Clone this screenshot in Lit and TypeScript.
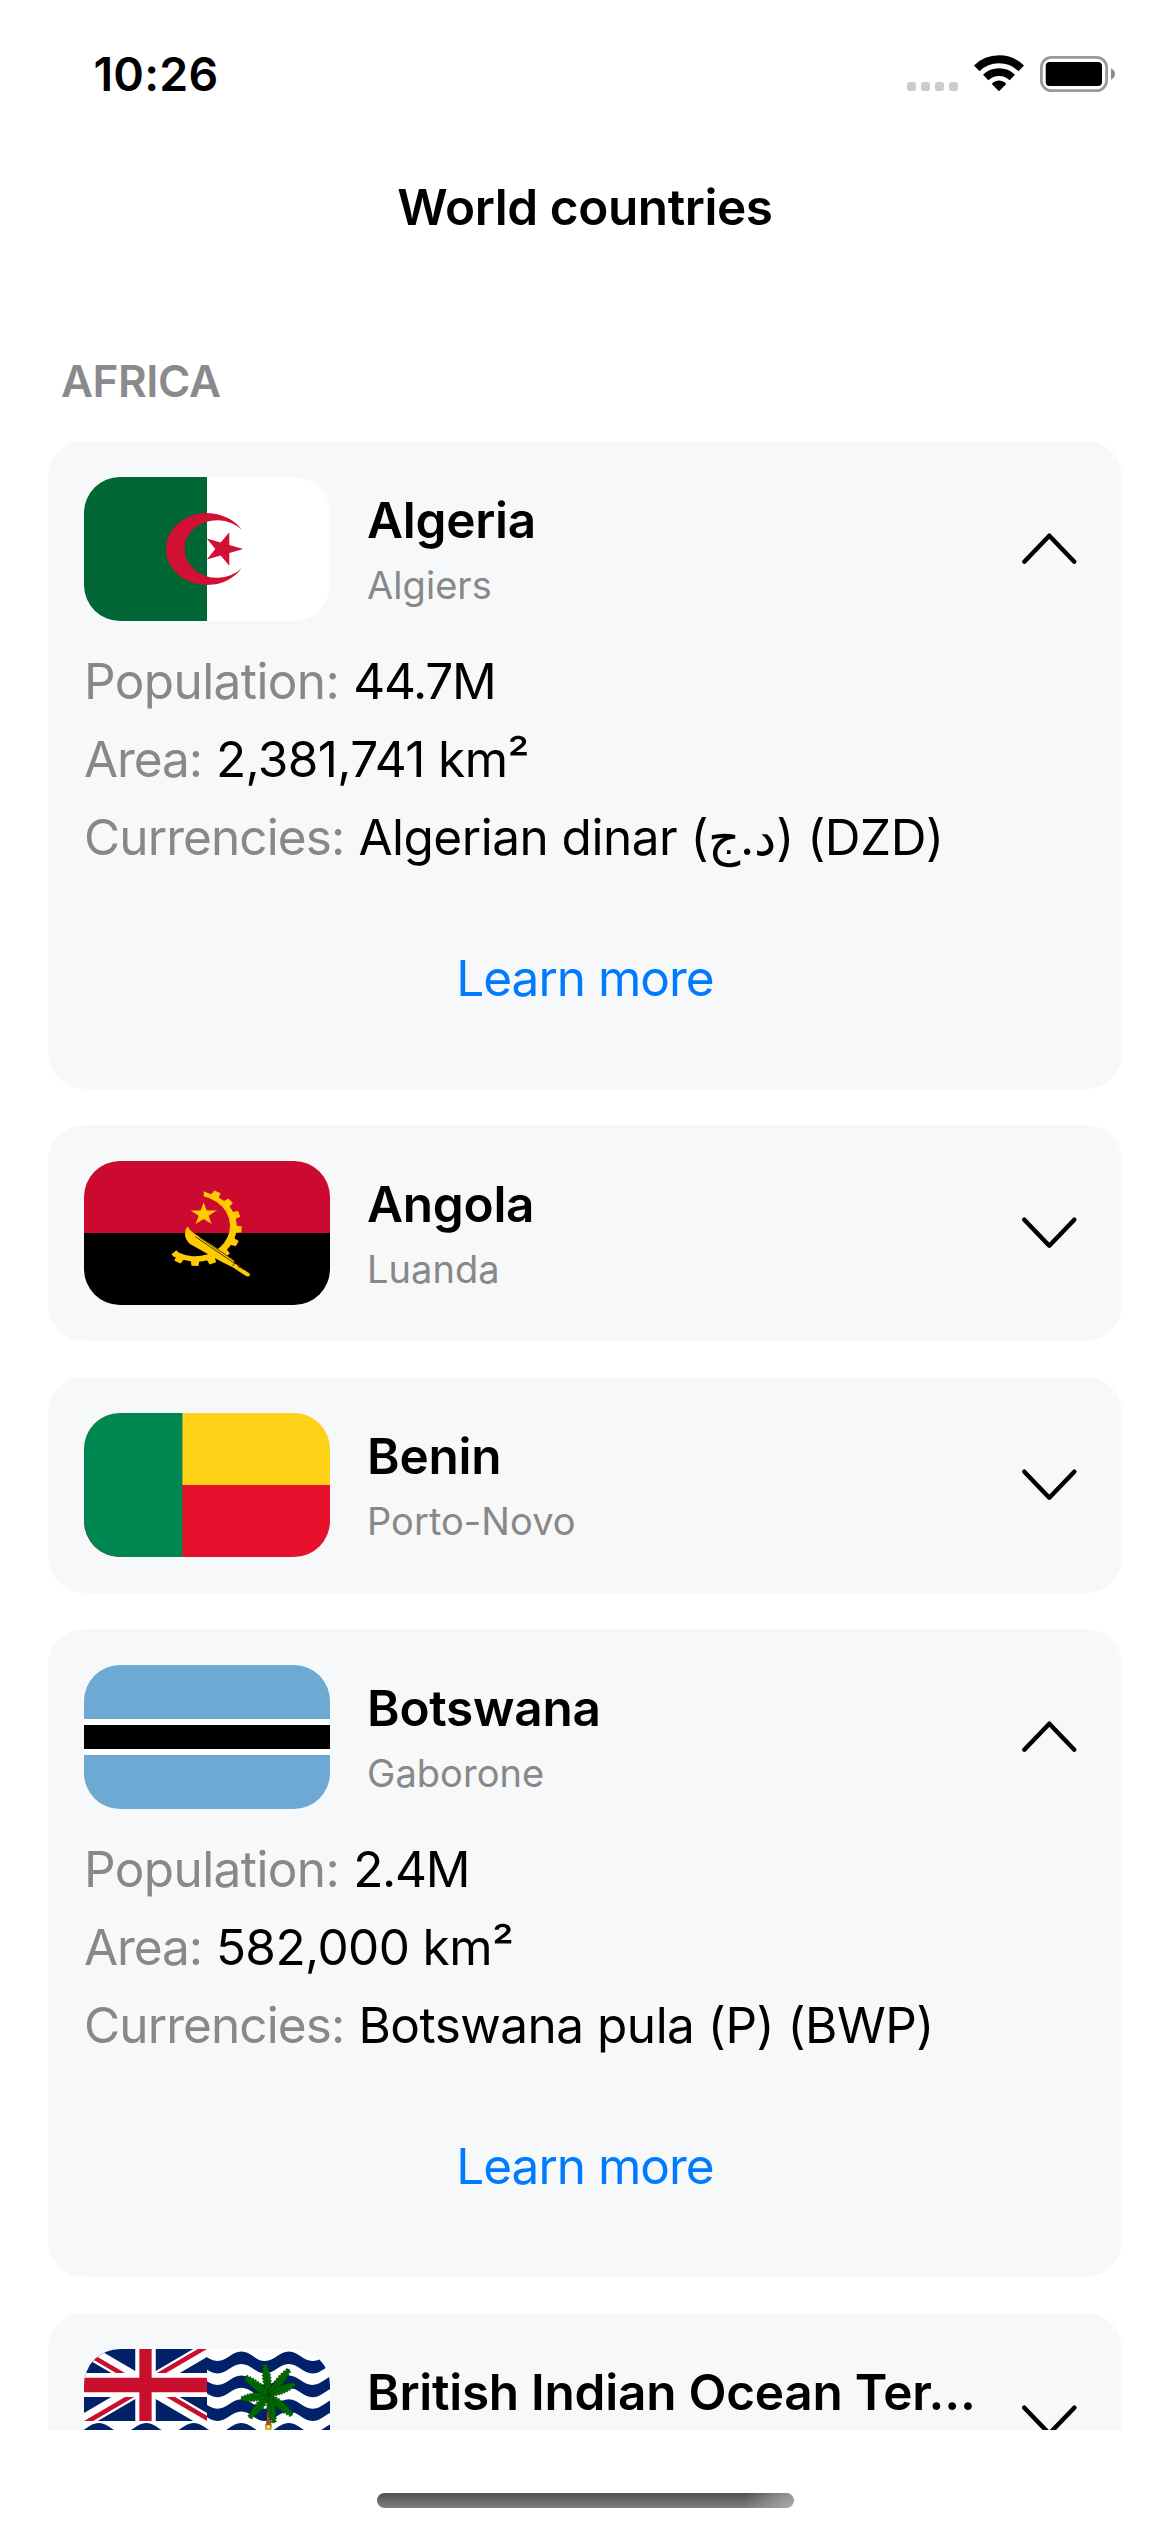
import { LitElement, html, css, svg, nothing, type TemplateResult } from "lit";
import { customElement, property, state } from "lit/decorators.js";

interface Country {
  name: string;
  capital?: string;
  flag: TemplateResult;
  population?: string;
  area?: string;
  currencies?: string;
}

// Flags are drawn on a 246 x 144 canvas.

const star = (cx: number, cy: number, r: number, rotation: number) =>
  Array.from({ length: 10 }, (_, i) => {
    const radius = i % 2 ? r * 0.382 : r;
    const angle = ((rotation + i * 36) * Math.PI) / 180;
    return `${(cx + radius * Math.cos(angle)).toFixed(2)},${(cy + radius * Math.sin(angle)).toFixed(2)}`;
  }).join(" ");

const algeria = svg`
  <rect width="123" height="144" fill="#006633"></rect>
  <rect x="123" width="123" height="144" fill="#fff"></rect>
  <g fill="#d21034" transform="scale(1.1389 1)">
    <path d="M138.4 52.7A36 36 0 1 0 138.4 91.3A28.8 28.8 0 1 1 138.4 52.7Z"></path>
    <polygon points=${star(122.1, 72, 17.7, 0)}></polygon>
  </g>`;

// Point on the cogwheel, by angle in degrees.
const cog = (r: number, deg: number) => {
  const a = (deg * Math.PI) / 180;
  return `${(97 + r * Math.cos(a)).toFixed(1)} ${(140 + r * Math.sin(a)).toFixed(1)}`;
};

// The machete is drawn without the horizontal stretch that the cogwheel has.
const angola = svg`
  <rect width="246" height="72" fill="#cc092f"></rect>
  <rect y="72" width="246" height="72"></rect>
  <g transform="translate(76 19) scale(0.3797 0.3333)" fill="#ffcb00">
    <path d=${`M${cog(108, -80)}L${cog(105, -73)}A105 105 0 1 1 ${cog(105, 121)}L${cog(109, 123)}L${cog(106, 129)}L${cog(89, 127)}L${cog(91.5, 122)}A91.5 91.5 0 1 0 ${cog(93, -79)}Z`}></path>
    ${[-62.5, -41, -19, 4, 25.5, 47, 69, 92.5, 115.5].map(
      (a) => svg`<path d="M98 -12L118 -9V9L98 12Z" transform=${`translate(97 140) rotate(${a})`}></path>`
    )}
    <polygon points=${star(115, 103, 36, -90)}></polygon>
  </g>
  <g transform="translate(76 19) scale(0.3333)" fill="#ffcb00">
    <path d="M83 139Q88 152 106 163L160 197L221 240L224 250L262 276Q272 281 269 287Q264 292 257 287L218 262L186 246L90 192Q75 178 75 163Q75 148 83 139Z"></path>
    <path d="M106 170L222 249M118 171L224 243M218 258L226 247M233 259L242 264M242 260L250 270" fill="none" stroke="#000" stroke-width="2.2"></path>
  </g>`;

const benin = svg`
  <rect width="246" height="72" fill="#fcd116"></rect>
  <rect y="72" width="246" height="72" fill="#e8112d"></rect>
  <rect width="98.4" height="144" fill="#008751"></rect>`;

const botswana = svg`
  <rect width="246" height="144" fill="#6da9d2"></rect>
  <rect y="54" width="246" height="36" fill="#fff"></rect>
  <rect y="60" width="246" height="24"></rect>`;

// Half a wave period, in flag units.
const half = 23.75;

const waveEdge = (start: number, dir: 1 | -1, top: number) => {
  let d = "";
  for (let i = 0; i < 12; i++) {
    const x = start + dir * half * i;
    const from = i % 2 ? top + 9.5 : top;
    const to = i % 2 ? top : top + 9.5;
    d += `C${x + dir * 9.5} ${from} ${x + dir * (half - 9.5)} ${to} ${x + dir * half} ${to}`;
  }
  return d;
};

// One blue band whose crests reach up to y.
const band = (y: number) => {
  const left = 14.8 - 2 * half;
  const right = left + 12 * half;
  return `M${left} ${y}${waveEdge(left, 1, y)}V${y + 12.4}${waveEdge(right, -1, y + 12.4)}Z`;
};

// Serrated palm leaf from the crown to a tip.
const frond = (tx: number, ty: number) => {
  const cx = 184.7;
  const cy = 46;
  const len = Math.hypot(tx - cx, ty - cy);
  const ux = (tx - cx) / len;
  const uy = (ty - cy) / len;
  const at = (d: number, w: number) => `${(cx + ux * d - uy * w).toFixed(1)},${(cy + uy * d + ux * w).toFixed(1)}`;
  const left: string[] = [];
  const right: string[] = [];
  for (let i = 1; i <= 9; i++) {
    const d = (len * i) / 9.8;
    const w = 2 + 2.7 * Math.sin((Math.PI * (i + 0.6)) / 11);
    left.push(at(d - 0.8, w - 1.5), at(d + 1.2, w));
    right.unshift(at(d + 1.2, -w), at(d - 0.8, 1.5 - w));
  }
  return [at(0, 0), ...left, at(len, 0), ...right].join(" ");
};

const fronds = [
  [181, 15], [205.3, 20.3], [211, 35], [208.3, 66.3], [190, 74], [165.3, 69], [157, 50], [161, 27.7],
];

const indianOcean = svg`
  <rect width="246" height="144" fill="#fff"></rect>
  ${[2.6, 26.4, 50.2, 74, 97.8, 121.6].map((y) => svg`<path d=${band(y)} fill="#012169"></path>`)}
  <svg width="123" height="72" viewBox="0 0 60 30" preserveAspectRatio="none">
    <clipPath id="quarters"><path d="M30 15H60V30ZV30H0ZH0V0ZV0H60Z"></path></clipPath>
    <rect width="60" height="30" fill="#012169"></rect>
    <path d="M0 0L60 30M60 0L0 30" stroke="#fff" stroke-width="6"></path>
    <path d="M0 0L60 30M60 0L0 30" stroke="#c8102e" stroke-width="4" clip-path="url(#quarters)"></path>
    <path d="M30 0V30M0 15H60" stroke="#fff" stroke-width="10"></path>
    <path d="M30 0V30M0 15H60" stroke="#c8102e" stroke-width="6"></path>
  </svg>
  <path d="M183.3 50H186L186.8 78H182.4Z" fill="#a5501c" stroke="#2b1606" stroke-width="0.4"></path>
  <g fill="#006c00" stroke="#06250a" stroke-width="0.4">
    ${fronds.map(([x, y]) => svg`<polygon points=${frond(x, y)}></polygon>`)}
  </g>
  <path d="M184.7 46L182 24M184.7 46L198 29M184.7 46L202 39M184.7 46L200 60M184.7 46L188 66M184.7 46L171 62M184.7 46L167 49M184.7 46L168 34" fill="none" stroke="#06350a" stroke-width="0.5"></path>
  <path d="M181.4 75.5H187.4L186.6 84H182.2Z" fill="#e8b21c" stroke="#6b4708" stroke-width="0.5"></path>
  <circle cx="184.4" cy="78" r="1.2" fill="#fff3b0"></circle>`;

const countries: Country[] = [
  { name: "Algeria", capital: "Algiers", flag: algeria, population: "44.7M", area: "2,381,741 km²", currencies: "Algerian dinar (د.ج) (DZD)" },
  { name: "Angola", capital: "Luanda", flag: angola },
  { name: "Benin", capital: "Porto-Novo", flag: benin },
  { name: "Botswana", capital: "Gaborone", flag: botswana, population: "2.4M", area: "582,000 km²", currencies: "Botswana pula (P) (BWP)" },
  { name: "British Indian Ocean Ter…", flag: indianOcean },
];

@customElement("status-bar")
export class StatusBar extends LitElement {
  static styles = css`
    :host {
      display: flex;
      box-sizing: border-box;
      height: 141px;
      padding: 7px 54px 0 93.5px;
      align-items: center;
      justify-content: space-between;
    }
    .time { font-size: 46.5px; font-weight: 600; letter-spacing: 0.19px; line-height: 60px; }
    .icons { display: block; }
  `;

  render() {
    return html`
      <span class="time">10:26</span>
      <svg class="icons" width="209" height="40" viewBox="0 0 209 40">
        <g fill="#cccccc">
          ${[0, 14, 28, 42].map((x) => svg`<rect x=${x} y="28" width="9" height="9" rx="2.8"></rect>`)}
        </g>
        <g transform="translate(92 37.3) scale(0.3333)">
          <path d="M-66.7 -69.1A96 96 0 0 1 66.7 -69.1" fill="none" stroke="#000" stroke-width="24"></path>
          <path d="M-39.9 -41.4A57.5 57.5 0 0 1 39.9 -41.4" fill="none" stroke="#000" stroke-width="23"></path>
          <path d="M0 0L-21 -21Q-21 -24 -17 -27Q0 -38 17 -27Q21 -24 21 -21Z"></path>
        </g>
        <rect x="134.4" y="3.4" width="65.2" height="33.2" rx="10" fill="none" stroke="#999999" stroke-width="2.8"></rect>
        <rect x="138.7" y="8" width="56.3" height="24" rx="4"></rect>
        <path d="M204 14.2Q208 16.5 208 20T204 25.8Z" fill="#8c8c8c"></path>
      </svg>
    `;
  }
}

@customElement("country-card")
export class CountryCard extends LitElement {
  static styles = css`
    :host { display: block; flex: none; padding: 36px; border-radius: 36px; background: #f7f8fa; }
    .head { display: flex; height: 144px; align-items: center; }
    .flag { display: block; flex: none; border-radius: 36px; overflow: hidden; }
    .titles { display: flex; flex: 1; min-width: 0; flex-direction: column; gap: 12px; margin-left: 37px; white-space: nowrap; }
    .name { font-size: 49.5px; font-weight: 600; line-height: 60px; letter-spacing: -0.25px; }
    .capital { min-height: 46px; font-size: 38px; line-height: 46px; letter-spacing: 0.05px; color: #888888; }
    .chevron { display: block; flex: none; }
    .details { margin: 21px 0 0; font-size: 49.5px; }
    .row { display: flex; gap: 14px; line-height: 78px; white-space: nowrap; }
    .label { color: #888888; }
    .value { margin: 0; }
    .population .label { letter-spacing: -0.6px; }
    .population .value { letter-spacing: -1.25px; }
    .area .label { letter-spacing: -1.1px; }
    .area .value { letter-spacing: -0.6px; }
    .currencies .label { letter-spacing: -0.9px; }
    .currencies .value { letter-spacing: -0.5px; }
    .more {
      display: block; width: 100%; height: 150px; margin-top: 27px; padding: 0; border: 0; background: none;
      font: inherit; font-size: 49.5px; letter-spacing: -1px; color: #007aff;
    }
  `;

  @property({ attribute: false }) country!: Country;

  render() {
    const { name, capital, flag, population, area, currencies } = this.country;
    const open = population !== undefined;
    return html`
      <div class="head">
        <svg class="flag" width="246" height="144" viewBox="0 0 246 144">${flag}</svg>
        <div class="titles">
          <span class="name">${name}</span>
          <span class="capital">${capital ?? nothing}</span>
        </div>
        <svg class="chevron" width="72" height="72" viewBox="0 0 72 72">
          <path d=${open ? "M10.3 48.7L35.3 22.7L60.3 48.7" : "M10.3 22.7L35.3 48.7L60.3 22.7"}
            fill="none" stroke="#000" stroke-width="4.5" stroke-linecap="round" stroke-linejoin="round"></path>
        </svg>
      </div>
      ${open
        ? html`
            <dl class="details">
              <div class="row population"><dt class="label">Population:</dt><dd class="value">${population}</dd></div>
              <div class="row area"><dt class="label">Area:</dt><dd class="value">${area}</dd></div>
              <div class="row currencies"><dt class="label">Currencies:</dt><dd class="value">${currencies}</dd></div>
            </dl>
            <button class="more">Learn more</button>
          `
        : nothing}
    `;
  }
}

@customElement("app-root")
export class AppRoot extends LitElement {
  static styles = css`
    :host {
      display: flex; flex-direction: column; width: 1170px; height: 2532px; overflow: hidden;
      background: #fff; color: #000; font-family: Inter, "Noto Sans", sans-serif;
    }
    .title { margin: 0; text-align: center; font-size: 49.5px; font-weight: 600; line-height: 132px; letter-spacing: -0.41px; }
    .list { display: flex; flex: 1; min-height: 0; flex-direction: column; gap: 36px; padding: 48px 48px 0; overflow: hidden; }
    .region { flex: none; margin: 0 0 -36px 13px; font-size: 44px; font-weight: 600; line-height: 120px; letter-spacing: -0.42px; color: #8a8a8e; }
    .home { display: flex; flex: none; justify-content: center; height: 39px; padding-top: 63px; }
    .indicator {
      width: 417px; height: 15px; border-radius: 7.5px;
      background: radial-gradient(circle at 100% 100%, #a8a8a8, transparent 50px), linear-gradient(#505050, #808080);
    }
  `;

  @state() private countries = countries;

  render() {
    return html`
      <status-bar></status-bar>
      <h1 class="title">World countries</h1>
      <main class="list">
        <h2 class="region">AFRICA</h2>
        ${this.countries.map((c) => html`<country-card .country=${c}></country-card>`)}
      </main>
      <div class="home"><div class="indicator"></div></div>
    `;
  }
}
